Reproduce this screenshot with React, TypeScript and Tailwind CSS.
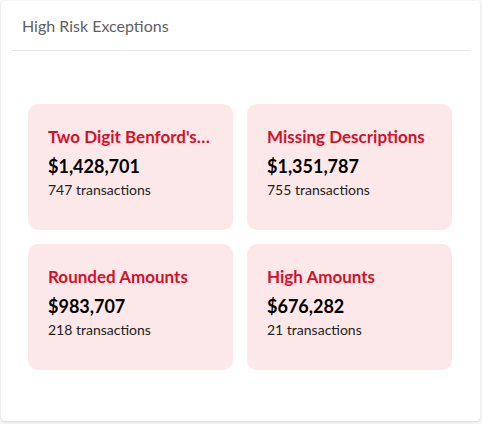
const exceptions = [
  { title: "Two Digit Benford's Law", amount: "$1,428,701", count: 747 },
  { title: "Missing Descriptions", amount: "$1,351,787", count: 755 },
  { title: "Rounded Amounts", amount: "$983,707", count: 218 },
  { title: "High Amounts", amount: "$676,282", count: 21 },
];

export default function App() {
  return (
    <div className="h-[424px] w-[482px] bg-[#f6f6f6] pt-px pl-px font-['Lato',sans-serif]">
      <div className="flex h-[420px] w-[479px] flex-col rounded-sm bg-white shadow-[0_1px_2px_rgba(0,0,0,0.12)]">
        <div className="ml-[11px] mr-[9px] flex h-[50px] items-center border-b border-[#e8e8e8] px-[10px]">
          <h2 className="text-base text-[#5f5f5f]">High Risk Exceptions</h2>
        </div>
        <div className="flex flex-1 items-center justify-center pt-[2px] pr-px">
          <div className="grid grid-cols-[205px_205px] gap-[14px]">
            {exceptions.map((e) => (
              <div
                key={e.title}
                className="flex h-[126px] flex-col rounded-[10px] bg-[#fde8e9] px-5 pt-[23px]"
              >
                <div className="truncate text-[17px] font-bold leading-5 text-[#d5102a]">
                  {e.title}
                </div>
                <div className="mt-[7px] text-[18px] font-bold leading-6 text-black">
                  {e.amount}
                </div>
                <div className="mt-[2px] text-sm leading-5 text-[#222]">{e.count} transactions</div>
              </div>
            ))}
          </div>
        </div>
      </div>
    </div>
  );
}
